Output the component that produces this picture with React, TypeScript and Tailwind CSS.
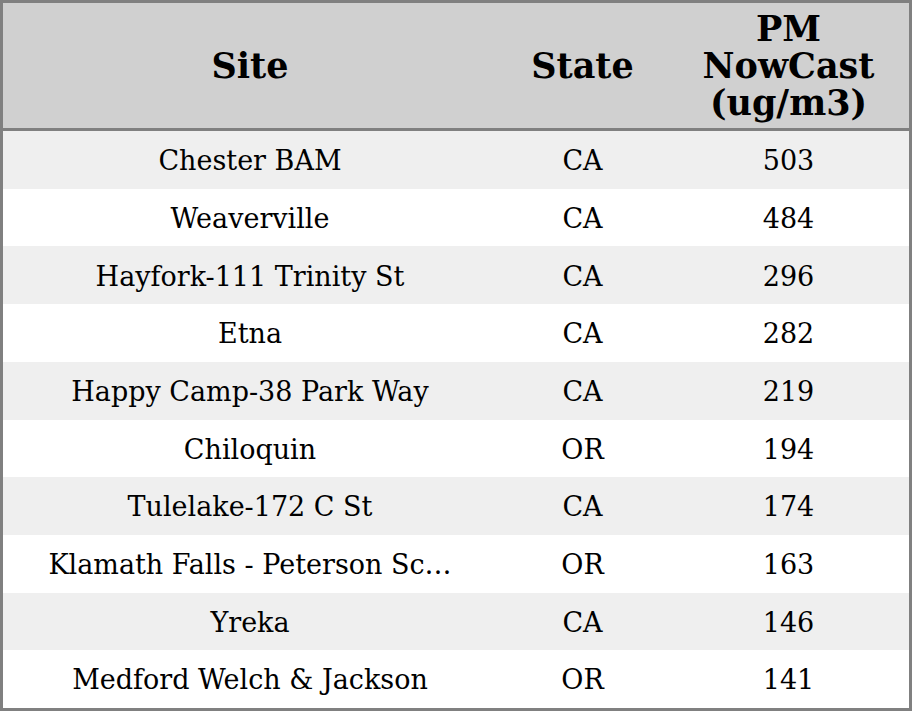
import React from "react";

const rows: [string, string, string][] = [
  ["Chester BAM", "CA", "503"],
  ["Weaverville", "CA", "484"],
  ["Hayfork-111 Trinity St", "CA", "296"],
  ["Etna", "CA", "282"],
  ["Happy Camp-38 Park Way", "CA", "219"],
  ["Chiloquin", "OR", "194"],
  ["Tulelake-172 C St", "CA", "174"],
  ["Klamath Falls - Peterson Sc\u2026", "OR", "163"],
  ["Yreka", "CA", "146"],
  ["Medford Welch & Jackson", "OR", "141"],
];

export default function App() {
  return (
    <div
      className="w-[912px] h-[711px] border-[3px] border-[#808080] bg-white text-black flex flex-col"
      style={{ fontFamily: '"DejaVu Serif", serif' }}
    >
      <div className="grid grid-cols-[494px_171px_1fr] h-[125px] bg-[#d0d0d0] border-b-[3px] border-[#808080] box-content font-bold text-[35px] leading-[37px]">
        <div className="flex items-center justify-center text-center">Site</div>
        <div className="flex items-center justify-center text-center">State</div>
        <div className="flex items-center justify-center text-center">
          PM
          <br />
          NowCast
          <br />
          (ug/m3)
        </div>
      </div>
      <div className="flex flex-col flex-1">
        {rows.map((r, i) => (
          <div
            key={i}
            className={`grid grid-cols-[494px_171px_1fr] flex-1 pt-[3px] text-[27px] ${
              i % 2 === 0 ? "bg-[#efefef]" : "bg-white"
            }`}
          >
            <div className="flex items-center justify-center whitespace-nowrap">{r[0]}</div>
            <div className="flex items-center justify-center">{r[1]}</div>
            <div className="flex items-center justify-center">{r[2]}</div>
          </div>
        ))}
      </div>
    </div>
  );
}
